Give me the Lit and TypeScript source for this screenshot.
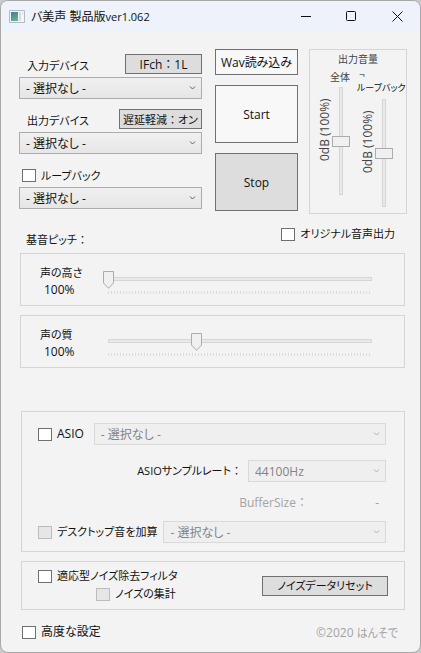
import { LitElement, html, css } from "lit";
import { customElement } from "lit/decorators.js";

@customElement("app-root")
export class AppRoot extends LitElement {
  static styles = css`
    :host {
      display: block;
      background: #c9c9c9;
      font: 12px/16px "Open Sans", "Noto Sans CJK JP", sans-serif;
      font-feature-settings: "palt";
      color: #111;
    }
    * {
      box-sizing: border-box;
    }
    button,
    select,
    input {
      font: inherit;
      font-feature-settings: inherit;
      color: inherit;
      margin: 0;
      padding: 0;
      border-radius: 0;
    }
    .window {
      display: flex;
      flex-direction: column;
      min-height: 100vh;
      border: 1px solid #a8a8a8;
      border-radius: 8px;
      background: #f3f3f3;
      overflow: hidden;
    }
    .kana {
      font-size: 11px;
    }

    .titlebar {
      display: flex;
      align-items: center;
      height: 31px;
      padding-left: 8px;
      background: #eef2fa;
    }
    .title {
      flex: 1;
      margin: 0 0 0 6px;
      font-size: 12px;
      font-weight: 400;
      white-space: nowrap;
    }
    .version {
      font-size: 11px;
    }
    .caption {
      display: grid;
      place-items: center;
      width: 45px;
      height: 31px;
      border: 0;
      background: none;
    }
    .caption:last-child {
      width: 46px;
    }
    svg {
      display: block;
    }

    .content {
      flex: 1;
      display: flex;
      flex-direction: column;
      padding: 17px 13px 8px 18px;
    }
    .top {
      display: flex;
    }
    .devices {
      flex: 1;
      min-width: 0;
      display: grid;
      align-content: start;
      gap: 9px;
      padding-top: 4px;
      margin-right: 13px;
    }
    .field-head {
      display: flex;
      align-items: center;
      justify-content: space-between;
      height: 24px;
      padding: 1px 0 0 8px;
    }
    .field-head.ticked {
      padding-left: 3px;
    }
    .field-head .btn {
      align-self: start;
    }

    .btn {
      border: 1px solid #707070;
      background: #ddd;
      padding-top: 1px;
      white-space: nowrap;
      text-align: center;
    }
    .small {
      height: 20px;
      line-height: 16px;
    }
    .channel {
      width: 77px;
    }
    .latency {
      width: 83px;
    }
    .reset {
      width: 126px;
    }
    .plain {
      background: #f8f8f8;
    }

    .combo {
      display: grid;
      align-items: center;
      flex: 1;
      min-width: 0;
      height: 22px;
    }
    .combo > * {
      grid-area: 1 / 1;
    }
    .combo svg {
      justify-self: end;
      margin-right: 6px;
      pointer-events: none;
      fill: none;
      stroke: #606060;
    }
    select {
      appearance: none;
      width: 100%;
      height: 22px;
      padding: 1px 0 0 6px;
      border: 1px solid #acacac;
      background: linear-gradient(#f0f0f0, #e6e6e6);
    }
    select:disabled {
      border-color: #d9d9d9;
      background: #efefef;
      color: #838383;
      opacity: 1;
    }
    select:disabled + svg {
      stroke: #b0b0b0;
    }

    .check {
      display: flex;
      align-items: center;
      gap: 5px;
      font-size: 11px;
      white-space: nowrap;
    }
    .check.large {
      font-size: 12px;
    }
    .check input {
      appearance: none;
      width: 14px;
      height: 13px;
      border: 1px solid #707070;
      background: #fff;
    }
    .check input:disabled {
      border-color: #bcbcbc;
      background: #e6e6e6;
    }

    .actions {
      display: grid;
      grid-template-rows: 26px 58px 58px;
      gap: 10px;
      width: 83px;
      margin-right: 11px;
    }

    .group {
      border: 1px solid #d5d5d5;
    }
    .volume {
      width: 98px;
      height: 165px;
      font-size: 10px;
      color: #444;
    }
    .volume-title {
      margin: 0;
      height: 18px;
      line-height: 18px;
      font-size: 10px;
      font-weight: 400;
      text-align: center;
    }
    .faders {
      display: flex;
      padding-left: 8px;
    }
    .fader {
      display: grid;
      grid-template: 19px 108px / 14px 18px;
      width: 43px;
    }
    .fader.loop {
      grid-template-rows: 31px 108px;
    }
    .fader-name {
      grid-column: 1 / 3;
      justify-self: end;
      height: 18px;
      line-height: 18px;
      white-space: nowrap;
    }
    .loop .fader-name {
      display: grid;
      grid-template-rows: 14px 12px;
      justify-self: start;
      height: 26px;
      margin-left: -4px;
      line-height: 12px;
      font-size: 9px;
      color: #111;
    }
    .mark {
      height: 12px;
      padding-left: 2px;
      font-size: 10px;
    }
    .level {
      writing-mode: vertical-rl;
      transform: rotate(180deg);
      justify-self: start;
      padding-bottom: 14px;
      height: 74px;
      line-height: 14px;
      font-size: 12px;
      white-space: nowrap;
    }
    .fader input {
      appearance: none;
      writing-mode: vertical-lr;
      direction: rtl;
      width: 18px;
      height: 108px;
      background: linear-gradient(#e7eaea, #e7eaea) 8px 1px / 2px 106px no-repeat,
        linear-gradient(#d6d6d6, #d6d6d6) 7px 0 / 4px 108px no-repeat;
    }
    .fader input::-webkit-slider-thumb {
      appearance: none;
      width: 18px;
      height: 11px;
      border: 1px solid #acacac;
      background: #f0f0f0;
    }

    .pitch-head {
      display: flex;
      justify-content: space-between;
      height: 39px;
      padding: 12px 12px 0 7px;
    }
    .pitch-head .check {
      height: 16px;
    }
    .pitch-title {
      margin: 6px 0 0;
      font-size: 11px;
      font-weight: 400;
    }
    .pitches {
      display: grid;
      gap: 9px;
      margin: 0 2px 0 1px;
    }
    .pitch {
      display: flex;
      height: 53px;
      padding: 11px 27px 0 19px;
    }
    .pitch-name {
      display: grid;
      grid-template-rows: 17px 17px;
      width: 63px;
    }
    .pitch-name output {
      padding-left: 4px;
    }
    .slide {
      flex: 1;
      min-width: 0;
      padding-top: 6px;
    }
    .slide input {
      display: block;
      appearance: none;
      width: 100%;
      height: 18px;
      background: none;
    }
    .slide input::-webkit-slider-runnable-track {
      height: 18px;
      background: linear-gradient(#e7eaea, #e7eaea) 6px 7px / calc(100% - 12px) 2px no-repeat,
        linear-gradient(#d6d6d6, #d6d6d6) 5px 6px / calc(100% - 10px) 4px no-repeat;
    }
    .slide input::-webkit-slider-thumb {
      appearance: none;
      width: 11px;
      height: 18px;
      background: url("data:image/svg+xml,%3Csvg xmlns='http://www.w3.org/2000/svg' width='11' height='18'%3E%3Cpath d='M.5.5h10v11.5l-5 5.3-5-5.3z' fill='%23f0f0f0' stroke='%23acacac'/%3E%3C/svg%3E")
        no-repeat;
    }
    .ticks {
      height: 3px;
      margin: 2px 5px 0;
      background: repeating-linear-gradient(90deg, #dcdcdc 0 1px, transparent 1px 3px);
    }

    .asio {
      margin: 43px 2px 0;
      padding: 11px 18px 8px 16px;
    }
    .row {
      display: flex;
      align-items: center;
      height: 22px;
      gap: 6px;
    }
    .row.first {
      margin-bottom: 15px;
      gap: 10px;
    }
    .row.rate {
      justify-content: flex-end;
    }
    .row.rate .combo {
      flex: none;
      width: 138px;
    }
    .row.buffer {
      height: 39px;
      justify-content: flex-end;
      padding: 2px 7px 0 0;
      color: #a3a3a3;
    }
    .size {
      width: 65px;
      text-align: right;
    }
    .colon {
      font-feature-settings: "palt" 0;
    }

    .noise {
      display: flex;
      align-items: center;
      justify-content: space-between;
      height: 49px;
      margin: 9px 2px 0;
      padding: 0 16px;
    }
    .noise-checks {
      display: grid;
      grid-template-rows: 18px 18px;
      padding-bottom: 1px;
    }
    .sub {
      padding-left: 58px;
    }

    .footer {
      display: flex;
      align-items: center;
      justify-content: space-between;
      margin-top: auto;
      height: 24px;
      padding: 0 9px 0 3px;
    }
    .copyright {
      padding-top: 2px;
      color: #a3a3a3;
    }
  `;

  private combo(id: string, text: string, name: string, disabled = false) {
    return html`<span class="combo">
      <select id=${id} aria-label=${name} ?disabled=${disabled}>
        <option>${text}</option>
      </select>
      <svg width="7" height="6"><path d="M1 1.5l2.5 2.5L6 1.5" /></svg>
    </span>`;
  }

  private check(text: string, disabled = false, extra = "") {
    return html`<label class="check ${extra}"
      ><input type="checkbox" ?disabled=${disabled} />${text}</label
    >`;
  }

  private pitch(id: string, name: string, min: number, max: number) {
    return html`<div class="group pitch">
      <div class="pitch-name">
        <label class="kana" for=${id}>${name}</label>
        <output for=${id}>100%</output>
      </div>
      <div class="slide">
        <input id=${id} type="range" min=${min} max=${max} .value=${"100"} />
        <div class="ticks"></div>
      </div>
    </div>`;
  }

  render() {
    const none = "- 選択なし -";
    return html`
      <div class="window">
        <header class="titlebar">
          <svg width="16" height="13" viewBox="0 0 16 13">
            <defs>
              <linearGradient id="pane" x2="0.4" y2="1">
                <stop offset="0" stop-color="#4a7a9c" />
                <stop offset="1" stop-color="#62b08c" />
              </linearGradient>
            </defs>
            <path d="M.5.5h15v12H.5z" fill="#f4f6f8" stroke="#b3bac2" />
            <path d="M2 2h7v9H2z" fill="url(#pane)" />
            <path d="M10 2h2v9h-2zM13 2h1v3h-1z" fill="#d5dde2" />
          </svg>
          <h1 class="title">バ美声 製品版<span class="version">ver1.062</span></h1>
          <button class="caption" aria-label="最小化">
            <svg width="11" height="11"><path d="M0 5.5h10" stroke="#111" /></svg>
          </button>
          <button class="caption" aria-label="最大化">
            <svg width="11" height="11">
              <rect x=".5" y=".5" width="9" height="9" rx="1" fill="none" stroke="#111" />
            </svg>
          </button>
          <button class="caption" aria-label="閉じる">
            <svg width="11" height="11">
              <path d="M.5.5l10 10M10.5.5l-10 10" stroke="#111" />
            </svg>
          </button>
        </header>

        <main class="content">
          <section class="top">
            <div class="devices">
              <div>
                <div class="field-head">
                  <label class="kana" for="input">入力デバイス</label>
                  <button class="btn small channel">
                    IFch<span class="colon">：</span>1L
                  </button>
                </div>
                ${this.combo("input", none, "入力デバイス")}
              </div>
              <div>
                <div class="field-head">
                  <label class="kana" for="output">出力デバイス</label>
                  <button class="btn small latency kana">
                    遅延軽減<span class="colon">：</span>オン
                  </button>
                </div>
                ${this.combo("output", none, "出力デバイス")}
              </div>
              <div>
                <div class="field-head ticked">${this.check("ループバック")}</div>
                ${this.combo("loop", none, "ループバック")}
              </div>
            </div>

            <div class="actions">
              <button class="btn plain">Wav読み込み</button>
              <button class="btn plain">Start</button>
              <button class="btn">Stop</button>
            </div>

            <div class="group volume">
              <h2 class="volume-title">出力音量</h2>
              <div class="faders">
                <div class="fader">
                  <label class="fader-name" for="master">全体</label>
                  <output class="level" for="master">0dB (100%)</output>
                  <input id="master" type="range" value="50" />
                </div>
                <div class="fader loop">
                  <label class="fader-name" for="loopback"
                    ><span class="mark">¬</span><span>ループバック</span></label
                  >
                  <output class="level" for="loopback">0dB (100%)</output>
                  <input id="loopback" type="range" value="50" />
                </div>
              </div>
            </div>
          </section>

          <div class="pitch-head">
            <h2 class="pitch-title">基音ピッチ<span class="colon">：</span></h2>
            ${this.check("オリジナル音声出力")}
          </div>
          <section class="pitches">
            ${this.pitch("height", "声の高さ", 100, 400)}
            ${this.pitch("quality", "声の質", 50, 200)}
          </section>

          <section class="group asio">
            <div class="row first">
              ${this.check("ASIO", false, "large")} ${this.combo("asio", none, "ASIO", true)}
            </div>
            <div class="row rate">
              <label class="kana" for="rate"
                >ASIOサンプルレート<span class="colon">：</span></label
              >
              ${this.combo("rate", "44100Hz", "ASIOサンプルレート", true)}
            </div>
            <div class="row buffer">
              <span>BufferSize<span class="colon">：</span></span>
              <span class="size">-</span>
            </div>
            <div class="row">
              ${this.check("デスクトップ音を加算", true)}
              ${this.combo("desktop", none, "デスクトップ音", true)}
            </div>
          </section>

          <section class="group noise">
            <div class="noise-checks">
              ${this.check("適応型ノイズ除去フィルタ")}
              ${this.check("ノイズの集計", true, "sub")}
            </div>
            <button class="btn small reset kana">ノイズデータリセット</button>
          </section>

          <footer class="footer">
            ${this.check("高度な設定", false, "large")}
            <span class="copyright">©2020 <span class="kana">はんそで</span></span>
          </footer>
        </main>
      </div>
    `;
  }
}
